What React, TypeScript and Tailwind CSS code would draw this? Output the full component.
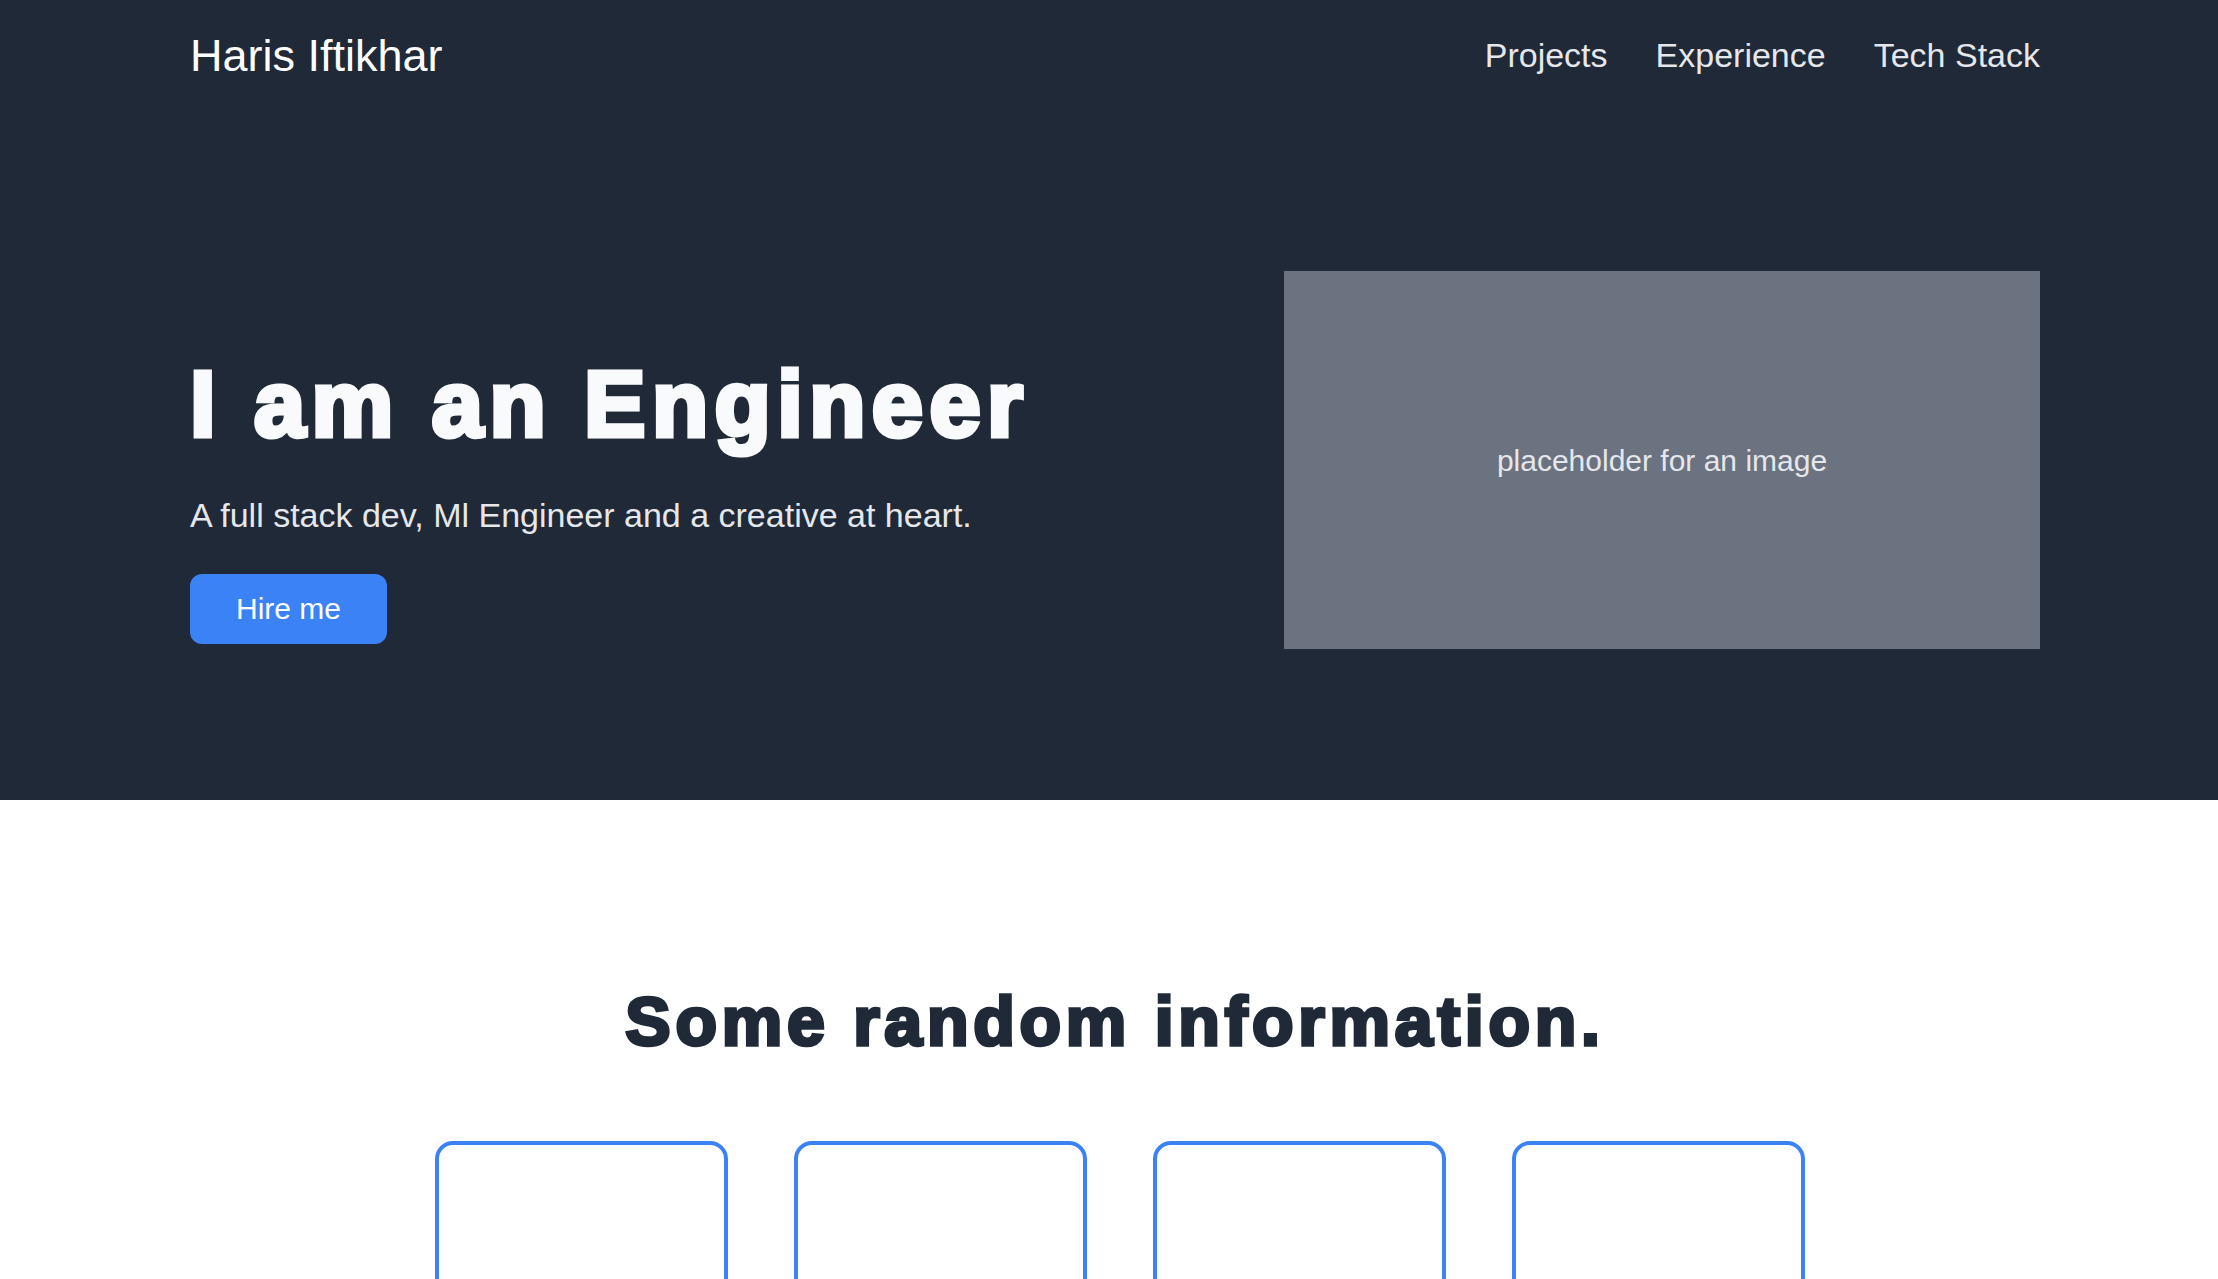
const navLinks = ["Projects", "Experience", "Tech Stack"];

const App = () => {
  return (
    <div className="min-h-screen bg-white font-['Liberation_Sans',Arial,sans-serif]">
      <section className="bg-[#1f2937]">
        <div className="ml-[190px] w-[1850px]">
          <nav className="h-[110px] flex items-center justify-between">
            <a href="#" className="text-[45px] leading-none text-white">
              Haris Iftikhar
            </a>
            <ul className="flex gap-[48px] text-[34px] leading-none text-[#e5e7eb]">
              {navLinks.map((link) => (
                <li key={link}>
                  <a href="#">{link}</a>
                </li>
              ))}
            </ul>
          </nav>
          <div className="flex justify-between items-start pt-[161px] pb-[151px]">
            <div className="pt-[87px]">
              <h1 className="text-[92px] leading-none font-bold tracking-[0.07em] text-[#f9fafb] [-webkit-text-stroke:5px_#f9fafb]">
                I am an Engineer
              </h1>
              <p className="mt-[43px] text-[34px] leading-[44px] text-[#e5e7eb]">
                A full stack dev, Ml Engineer and a creative at heart.
              </p>
              <button className="mt-[37px] h-[70px] px-[46px] rounded-[12px] bg-[#3b82f6] text-[30px] leading-none text-white">
                Hire me
              </button>
            </div>
            <div className="w-[756px] h-[378px] bg-[#6b7280] flex items-center justify-center text-[30px] text-[#e5e7eb]">
              placeholder for an image
            </div>
          </div>
        </div>
      </section>
      <section className="ml-[190px] w-[1850px] pt-[187px]">
        <h2 className="text-center text-[68px] leading-none font-bold tracking-[0.07em] text-[#1f2937] [-webkit-text-stroke:3.5px_#1f2937]">
          Some random information.
        </h2>
        <div className="mt-[86px] pl-[9px] flex justify-center gap-[66px]">
          {[0, 1, 2, 3].map((i) => (
            <div
              key={i}
              className="w-[293px] h-[320px] border-[4px] border-[#3b82f6] rounded-[18px]"
            />
          ))}
        </div>
      </section>
    </div>
  );
};

export default App;
